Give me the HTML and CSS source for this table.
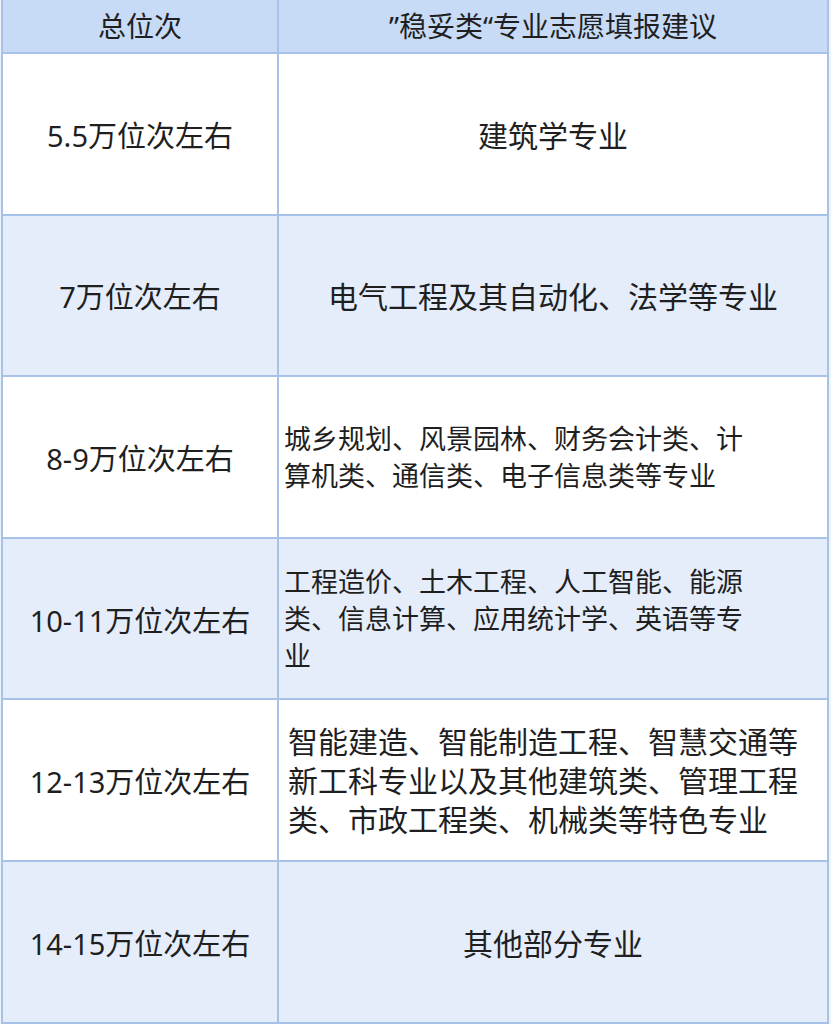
FILE: index.html
```html
<!DOCTYPE html>
<html lang="zh-CN">
<head>
<meta charset="utf-8">
<title>稳妥类专业志愿填报建议</title>
<link rel="stylesheet" href="styles.css">
</head>
<body>
<table class="tbl">
  <colgroup><col class="c1"><col class="c2"></colgroup>
  <thead>
    <tr class="head"><th>总位次</th><th>”稳妥类“专业志愿填报建议</th></tr>
  </thead>
  <tbody>
    <tr class="row white"><td class="rank">5.5万位次左右</td><td class="center">建筑学专业</td></tr>
    <tr class="row blue"><td class="rank">7万位次左右</td><td class="center">电气工程及其自动化、法学等专业</td></tr>
    <tr class="row white"><td class="rank">8-9万位次左右</td><td class="left small">城乡规划、风景园林、财务会计类、计算机类、通信类、电子信息类等专业</td></tr>
    <tr class="row blue"><td class="rank">10-11万位次左右</td><td class="left small">工程造价、土木工程、人工智能、能源类、信息计算、应用统计学、英语等专业</td></tr>
    <tr class="row white"><td class="rank">12-13万位次左右</td><td class="left big">智能建造、智能制造工程、智慧交通等新工科专业以及其他建筑类、管理工程类、市政工程类、机械类等特色专业</td></tr>
    <tr class="row blue"><td class="rank">14-15万位次左右</td><td class="center">其他部分专业</td></tr>
  </tbody>
</table>
</body>
</html>
```
FILE: styles.css
```css
html, body {
  margin: 0;
  padding: 0;
  background: #eef3fc;
}
body {
  font-family: "Noto Sans", "Noto Sans CJK SC", sans-serif;
  color: #1f1f1f;
}
.tbl {
  border-collapse: collapse;
  width: 828px;
  margin-left: 1px;
  margin-top: -2px;
  table-layout: fixed;
  border: 2px solid #a7c2e8;
}
.c1 { width: 276px; }
.tbl th, .tbl td {
  border: 2px solid #a7c2e8;
  vertical-align: middle;
  padding: 0;
  font-weight: 400;
}
.head th {
  background: #c7dbf7;
  height: 52px;
  font-size: 28px;
  text-align: center;
  line-height: 36px;
}
.row td { height: 159.6px; }
.white td { background: #ffffff; }
.blue td { background: #e5edfb; }
.rank {
  font-size: 29px;
  text-align: center;
}
.center {
  font-size: 30px;
  text-align: center;
}
.left {
  text-align: left;
}
.small {
  font-size: 27px;
  line-height: 37px;
  padding: 0 70px 0 5px !important;
}
.big {
  font-size: 30px;
  line-height: 39px;
  padding: 0 14px 0 9px !important;
}
```
